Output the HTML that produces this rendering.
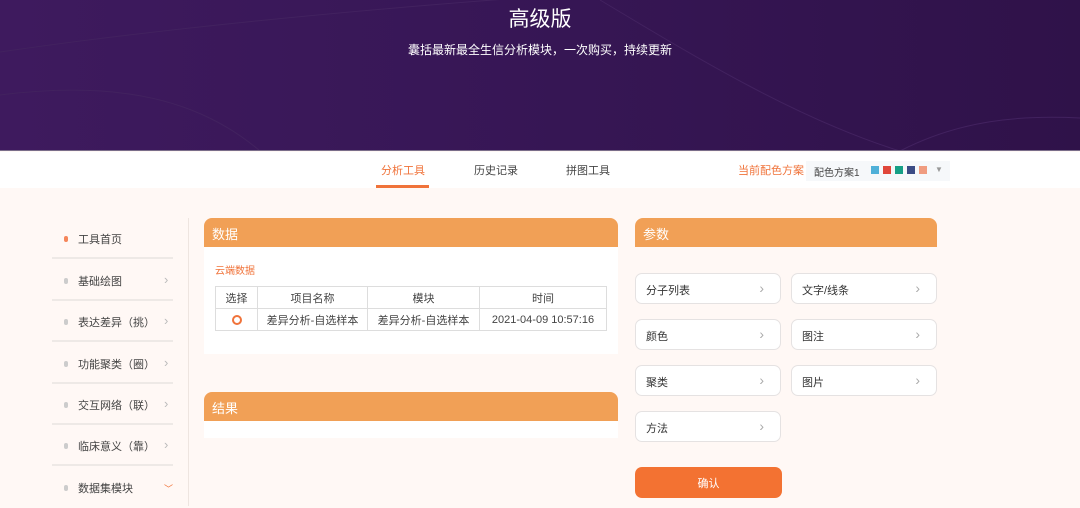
<!DOCTYPE html>
<html><head><meta charset="utf-8"><style>
*{margin:0;padding:0;box-sizing:border-box}
body{width:1080px;height:506px;overflow:hidden;background:#fff8f5;font-family:"Liberation Sans","Noto Sans CJK SC",sans-serif;position:relative;font-size:11px;color:#333}
.hdr{position:absolute;left:0;top:0;width:1080px;height:151px;background:linear-gradient(90deg,#3e1a5e,#381757 40%,#2f1249);overflow:hidden}
.hdr:after{content:"";position:absolute;left:0;right:0;bottom:0;height:1px;background:#7a6e8a}
.t1{position:absolute;left:0;width:1080px;top:3px;text-align:center;color:#fff;font-size:21px}
.t2{position:absolute;left:0;width:1080px;top:41px;text-align:center;color:#fff;font-size:12px}
.nav{position:absolute;left:0;top:152px;width:1080px;height:36px;background:#fff}
.nav span{position:absolute;top:10px;font-size:11px;color:#444}
.abs{position:absolute}
.side .it{position:absolute;left:52px;width:121px;height:41px;border-bottom:2px solid #eee9e6}
.side .it .d{position:absolute;left:12px;top:18px;width:4px;height:6px;border-radius:2px;background:#ccc}
.side .it .tx{position:absolute;left:26px;top:13px;font-size:11px;color:#444}
.side .it .ar{position:absolute;left:112px;top:13px;color:#bbb;font-size:13px;line-height:14px}
.ph{position:absolute;background:#f1a056;color:#fff;font-size:13px;border-radius:8px 8px 0 0;padding:6px 0 0 8px;height:29px}
.card{position:absolute;background:#fff}
table{border-collapse:collapse;position:absolute;left:215px;top:286px;width:392px;font-size:11px;color:#444}
td{border:1px solid #ddd;height:22px;text-align:center}
.bt{position:absolute;width:146px;height:31px;background:#fff;border:1px solid #e5e2e2;border-radius:7px;font-size:11px;color:#333;padding:8px 0 0 10px}
.bt i{position:absolute;right:16px;top:7px;font-style:normal;color:#aaa;font-size:14px;line-height:14px}
</style></head><body>
<div class="hdr">
<svg width="1080" height="151" style="position:absolute;left:0;top:0"><path d="M0 52 C150 30 350 10 560 -5" stroke="#42225f" fill="none" stroke-width="1"/><path d="M0 95 C120 80 200 100 260 151" stroke="#42225f" fill="none"/><path d="M600 0 C700 60 800 120 900 151" stroke="#42225f" fill="none"/><path d="M900 151 C960 120 1020 115 1080 118" stroke="#42225f" fill="none"/></svg>
<div class="t1">高级版</div><div class="t2">囊括最新最全生信分析模块，一次购买，持续更新</div></div>
<div class="nav">
<span style="left:381px;color:#f0733a">分析工具</span>
<div class="abs" style="left:376px;top:33px;width:53px;height:3px;background:#f0733a"></div>
<span style="left:474px">历史记录</span>
<span style="left:566px">拼图工具</span>
<span style="left:738px;color:#f0733a">当前配色方案</span>
<div class="abs" style="left:806px;top:9px;width:144px;height:20px;background:#f6f8fa"></div>
<span style="left:814px;top:12px;font-size:10px">配色方案1</span>
<div class="abs" style="left:871px;top:14px;width:8px;height:8px;background:#4fb0d8"></div>
<div class="abs" style="left:883px;top:14px;width:8px;height:8px;background:#e0463a"></div>
<div class="abs" style="left:895px;top:14px;width:8px;height:8px;background:#16a086"></div>
<div class="abs" style="left:907px;top:14px;width:8px;height:8px;background:#3b4c85"></div>
<div class="abs" style="left:919px;top:14px;width:8px;height:8px;background:#f09c80"></div>
<span style="left:935px;top:13px;font-size:8px;color:#999">▼</span>
</div>
<div class="side">
<div class="it" style="top:218px"><div class="d" style="background:#f5865a"></div><div class="tx">工具首页</div></div>
<div class="it" style="top:260px"><div class="d"></div><div class="tx">基础绘图</div><div class="ar">›</div></div>
<div class="it" style="top:301px"><div class="d"></div><div class="tx">表达差异（挑）</div><div class="ar">›</div></div>
<div class="it" style="top:343px"><div class="d"></div><div class="tx">功能聚类（圈）</div><div class="ar">›</div></div>
<div class="it" style="top:384px"><div class="d"></div><div class="tx">交互网络（联）</div><div class="ar">›</div></div>
<div class="it" style="top:425px"><div class="d"></div><div class="tx">临床意义（靠）</div><div class="ar">›</div></div>
<div class="it" style="top:467px;border:none"><div class="d"></div><div class="tx">数据集模块</div><div class="ar" style="color:#f0733a;font-size:9px;top:15px">﹀</div></div>
</div>
<div class="abs" style="left:188px;top:218px;width:1px;height:288px;background:#eee5e0"></div>
<div class="card" style="left:204px;top:247px;width:414px;height:107px"></div>
<div class="ph" style="left:204px;top:218px;width:414px">数据</div>
<div class="abs" style="left:215px;top:262px;color:#f0733a;font-size:10px">云端数据</div>
<table><tr><td style="width:42px">选择</td><td style="width:110px">项目名称</td><td style="width:112px">模块</td><td>时间</td></tr>
<tr><td><span style="display:inline-block;width:10px;height:10px;border:2.5px solid #f0733a;border-radius:50%;vertical-align:middle"></span></td><td>差异分析-自选样本</td><td>差异分析-自选样本</td><td>2021-04-09 10:57:16</td></tr></table>
<div class="card" style="left:204px;top:421px;width:414px;height:17px"></div>
<div class="ph" style="left:204px;top:392px;width:414px">结果</div>
<div class="ph" style="left:635px;top:218px;width:302px">参数</div>
<div class="bt" style="left:635px;top:273px">分子列表<i>›</i></div>
<div class="bt" style="left:791px;top:273px">文字/线条<i>›</i></div>
<div class="bt" style="left:635px;top:319px">颜色<i>›</i></div>
<div class="bt" style="left:791px;top:319px">图注<i>›</i></div>
<div class="bt" style="left:635px;top:365px">聚类<i>›</i></div>
<div class="bt" style="left:791px;top:365px">图片<i>›</i></div>
<div class="bt" style="left:635px;top:411px">方法<i>›</i></div>
<div class="abs" style="left:635px;top:467px;width:147px;height:31px;background:#f37232;border-radius:7px;color:#fff;text-align:center;padding-top:8px;font-size:11px">确认</div>
</body></html>
